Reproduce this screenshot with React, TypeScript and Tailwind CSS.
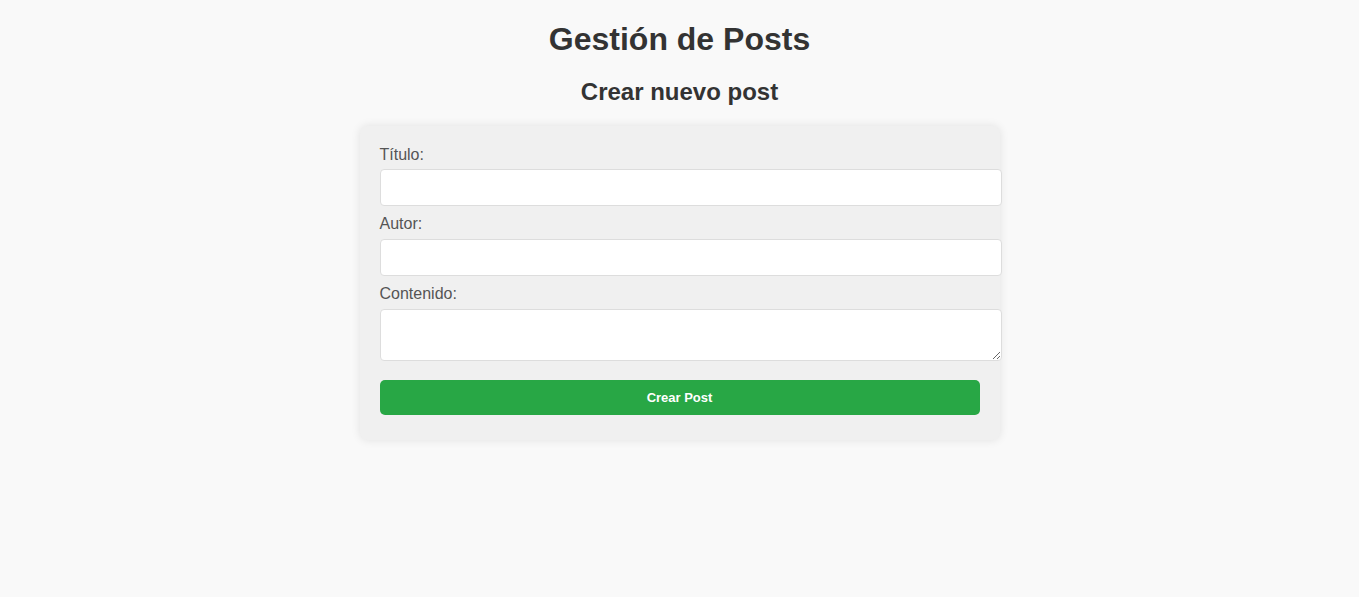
import { useState } from 'react';

const App = () => {
  const [titulo, setTitulo] = useState('');
  const [autor, setAutor] = useState('');
  const [contenido, setContenido] = useState('');

  return (
    <main
      className="min-h-screen bg-[#f9f9f9] text-[#333] pt-[21px]"
      style={{ fontFamily: '"Liberation Sans", Arial, sans-serif' }}
    >
      <h1 className="text-[32px] font-bold leading-[37px] text-center">Gestión de Posts</h1>
      <h2 className="text-[24px] font-bold leading-[28px] text-center mt-[20px]">Crear nuevo post</h2>

      {/* Form card */}
      <form
        className="w-[640px] mx-auto mt-[20px] p-[20px] pb-[25px] bg-[#f0f0f0] rounded-[8px] shadow-[0_0_10px_rgba(0,0,0,0.1)]"
        onSubmit={(e) => e.preventDefault()}
      >
        <label className="block text-[16px] leading-[18px] text-[#555] mb-[5px]">Título:</label>
        <input
          value={titulo}
          onChange={(e) => setTitulo(e.target.value)}
          className="box-content block w-full h-[15px] py-[10px] px-[10px] mb-[9px] bg-white border border-[#ddd] rounded-[4px] text-[13px]"
        />
        <label className="block text-[16px] leading-[18px] text-[#555] mb-[6px]">Autor:</label>
        <input
          value={autor}
          onChange={(e) => setAutor(e.target.value)}
          className="box-content block w-full h-[15px] py-[10px] px-[10px] mb-[9px] bg-white border border-[#ddd] rounded-[4px] text-[13px]"
        />
        <label className="block text-[16px] leading-[18px] text-[#555] mb-[6px]">Contenido:</label>
        <textarea
          value={contenido}
          onChange={(e) => setContenido(e.target.value)}
          className="box-content block w-full h-[30px] py-[10px] px-[10px] bg-white border border-[#ddd] rounded-[4px] text-[13px]"
        />
        <button
          type="submit"
          className="block w-full h-[35px] mt-[19px] bg-[#28a745] text-white text-[13px] font-bold rounded-[5px]"
        >
          Crear Post
        </button>
      </form>
    </main>
  );
};

export default App;
